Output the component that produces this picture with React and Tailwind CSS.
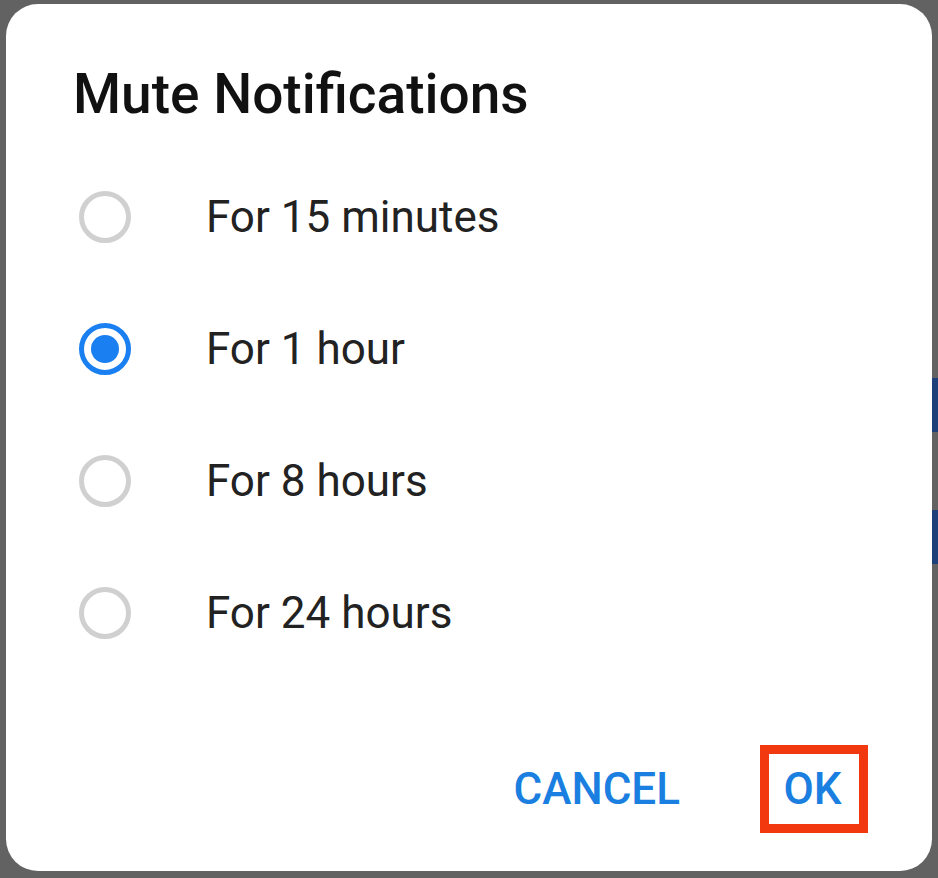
export default function App() {
  const items = [
    { label: "For 15 minutes", selected: false },
    { label: "For 1 hour", selected: true },
    { label: "For 8 hours", selected: false },
    { label: "For 24 hours", selected: false },
  ];
  return (
    <div className="w-[938px] h-[878px] bg-[#626262] relative overflow-hidden" style={{ fontFamily: "Roboto, 'Noto Sans', sans-serif" }}>
      <div className="absolute right-0 top-[378px] w-[6px] h-[54px] bg-[#1d3f7a]" />
      <div className="absolute right-0 top-[510px] w-[6px] h-[54px] bg-[#1d3f7a]" />
      <div className="absolute left-[6px] top-[4px] w-[926px] h-[867px] bg-white rounded-[32px] flex flex-col">
        <h1 className="pl-[67px] pt-[58px] text-[55px] leading-[64px] font-medium text-[#111111]">
          Mute Notifications
        </h1>
        <div className="mt-[25px] flex flex-col">
          {items.map((it) => (
            <div key={it.label} className="h-[132px] flex items-center pl-[73px]">
              {it.selected ? (
                <div className="w-[52px] h-[52px] rounded-full border-[5px] border-[#1a7ff0] flex items-center justify-center">
                  <div className="w-[28px] h-[28px] rounded-full bg-[#1a7ff0]" />
                </div>
              ) : (
                <div className="w-[52px] h-[52px] rounded-full border-[5px] border-[#d0d0d0]" />
              )}
              <span className="ml-[75px] text-[44px] text-[#222222]">{it.label}</span>
            </div>
          ))}
        </div>
        <div className="mt-auto mb-[38px] flex items-center justify-end pr-[64px]">
          <span className="text-[44px] font-medium text-[#1a7fe0] mr-[80px]">CANCEL</span>
          <div className="w-[108px] h-[88px] border-[9px] border-[#f1380f] flex items-center justify-center pr-[3px]">
            <span className="text-[44px] font-medium text-[#1a7fe0]">OK</span>
          </div>
        </div>
      </div>
    </div>
  );
}
